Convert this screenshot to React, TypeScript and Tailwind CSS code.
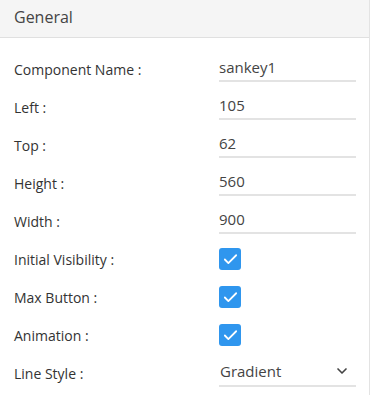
import { ChevronDown, Check } from "lucide-react";

const fields = [
  { label: "Component Name :", value: "sankey1" },
  { label: "Left :", value: "105" },
  { label: "Top :", value: "62" },
  { label: "Height :", value: "560" },
  { label: "Width :", value: "900" },
];

const checks = ["Initial Visibility :", "Max Button :", "Animation :"];

const Row = ({ label, children }: { label: string; children: React.ReactNode }) => (
  <div className="flex items-center h-[38px]">
    <div className="w-[219px] pl-[14px] text-[14px] text-[#333] font-medium">{label}</div>
    {children}
  </div>
);

export default function App() {
  return (
    <div
      className="w-[370px] h-[395px] bg-white border-r border-[#e3e3e3] overflow-hidden"
      style={{ fontFamily: "'Open Sans', 'Noto Sans', sans-serif" }}
    >
      <div className="h-[38px] bg-[#f5f5f5] border-b border-[#e0e0e0] flex items-center px-[14px] pb-[4px] text-[16px] text-[#444]">
        General
      </div>
      <div className="pt-[12px]">
        {fields.map((f) => (
          <Row key={f.label} label={f.label}>
            <div className="w-[137px] h-[26px] border-b-2 border-[#e3e3e3] flex items-center pb-[2px] text-[15px] text-[#444]">
              {f.value}
            </div>
          </Row>
        ))}
        {checks.map((c) => (
          <Row key={c} label={c}>
            <div className="w-[22px] h-[22px] rounded-[3px] bg-[#2f96ee] flex items-center justify-center">
              <Check size={17} strokeWidth={2.5} className="text-white" />
            </div>
          </Row>
        ))}
        <Row label="Line Style :">
          <div className="w-[137px] h-[28px] border-b-2 border-[#e3e3e3] flex items-center justify-between pl-[1px] pr-[6px] pb-[2px] text-[15px] text-[#444]">
            <span>Gradient</span>
            <ChevronDown size={16} strokeWidth={2.5} className="text-[#444]" />
          </div>
        </Row>
      </div>
    </div>
  );
}
